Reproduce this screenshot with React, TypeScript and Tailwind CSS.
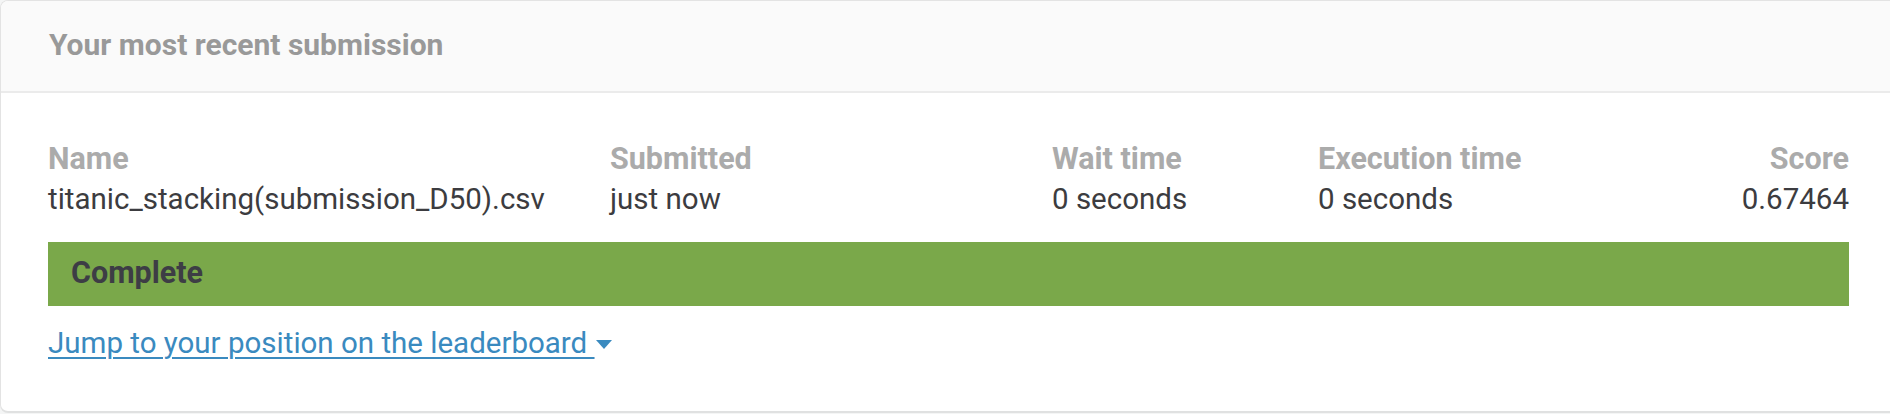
import React from 'react';

const columns = [
  { label: 'Name', value: 'titanic_stacking(submission_D50).csv' },
  { label: 'Submitted', value: 'just now' },
  { label: 'Wait time', value: '0 seconds' },
  { label: 'Execution time', value: '0 seconds' },
];

export default function App() {
  return (
    <div className="w-[1890px] h-[414px] overflow-hidden bg-[#f4f5f5] font-['Roboto',sans-serif]">
      <div className="w-[1900px] bg-white border-[1px] border-r-0 border-[#e3e3e3] border-b-2 border-b-[#e0e1e1] rounded-l-[8px] overflow-hidden">
        {/* header */}
        <div className="h-[92px] flex items-center pl-[48px] pb-[4px] bg-[#fafafa] border-b-2 border-[#ebebeb]">
          <span className="text-[30px] font-bold text-[#999999]">Your most recent submission</span>
        </div>

        {/* body */}
        <div className="w-[1848px] pl-[47px] pt-[47px] pb-[49px]">
          <div className="grid grid-cols-[562px_442px_266px_1fr_auto] leading-[38px]">
            {columns.map((c) => (
              <div key={c.label} className="flex flex-col">
                <span className="text-[30.5px] font-bold text-[#ababab]">{c.label}</span>
                <span className="mt-[2px] text-[29.5px] text-[#3c3c40]">{c.value}</span>
              </div>
            ))}
            <div className="flex flex-col items-end">
              <span className="text-[30.5px] font-bold text-[#ababab]">Score</span>
              <span className="mt-[2px] text-[29.5px] text-[#3c3c40]">0.67464</span>
            </div>
          </div>

          <div className="mt-[24px] h-[64px] bg-[#7aa84a] flex items-center pl-[23px] pb-[3px]">
            <span className="text-[30.5px] font-bold text-[#3d3d45]">Complete</span>
          </div>

          <div className="mt-[18px] h-[38px] leading-[38px] flex items-center">
            <a href="#" className="text-[29.5px] text-[#3a8abf] underline decoration-[2px] underline-offset-[4px] whitespace-pre">
              {'Jump to your position on the leaderboard '}
            </a>
            <svg className="ml-[1px] mt-[2px]" width="16" height="9" viewBox="0 0 16 9">
              <path d="M0 0 L16 0 L8 9 Z" fill="#3a8abf" />
            </svg>
          </div>
        </div>
      </div>
    </div>
  );
}
